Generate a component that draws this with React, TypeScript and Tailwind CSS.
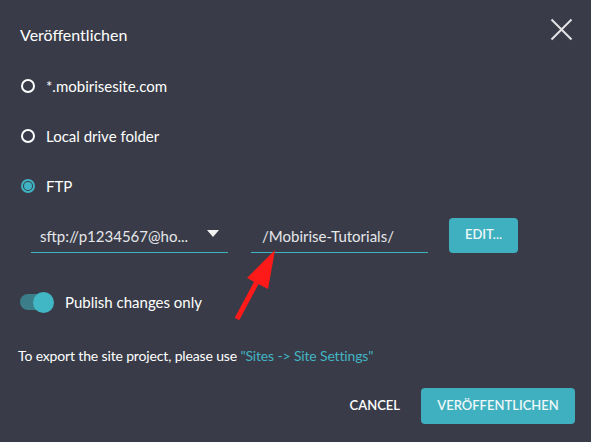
import { useState } from 'react';

const Radio = ({ label, checked }: { label: string; checked?: boolean }) => (
  <div className="flex items-center h-[20px] gap-[11px]">
    {checked ? (
      <span className="w-[14px] h-[14px] rounded-full border-2 border-[#3fb5c3] flex items-center justify-center">
        <span className="w-[8px] h-[8px] rounded-full bg-[#3fb5c3]" />
      </span>
    ) : (
      <span className="w-[14px] h-[14px] rounded-full border-2 border-white" />
    )}
    <span className="text-[15px] text-white">{label}</span>
  </div>
);

const App = () => {
  const [onlyChanges] = useState(true);

  return (
    <div
      className="relative w-[591px] h-[442px] bg-[#393c48] text-white overflow-hidden"
      style={{ fontFamily: 'Lato, "Noto Sans", sans-serif' }}
    >
      {/* close */}
      <svg className="absolute left-[550px] top-[18px]" width="23" height="23" viewBox="0 0 23 23">
        <path d="M1.5 1.5 L21.5 21.5 M21.5 1.5 L1.5 21.5" stroke="#e4e4e6" strokeWidth="2" />
      </svg>

      <div className="pl-[20px] pr-[16px] pt-[25px]">
        <h2 className="text-[16px] leading-[20px]">Veröffentlichen</h2>

        <div className="pl-px mt-[31px] flex flex-col gap-[30px]">
          <Radio label="*.mobirisesite.com" />
          <Radio label="Local drive folder" />
          <Radio label="FTP" checked />
        </div>

        {/* ftp settings */}
        <div className="flex items-center mt-[23px] pl-[11px]">
          <div className="w-[197px] h-[34px] border-b border-[#3fb5c3] flex items-center justify-between pl-[9px] pr-[9px] pt-[2px]">
            <span className="text-[15px] text-[#e6e7ea]">sftp://p1234567@ho...</span>
            <svg width="12" height="7" viewBox="0 0 12 7" className="mb-[6px]">
              <path d="M0 0 H12 L6 7 Z" fill="#f2f2f2" />
            </svg>
          </div>
          <div className="ml-[23px] w-[177px] h-[34px] border-b border-[#3fb5c3] flex items-center pl-[11px] pt-[2px]">
            <span className="text-[15px] text-[#e6e7ea]">/Mobirise-Tutorials/</span>
          </div>
          <button className="ml-[21px] w-[69px] h-[35px] rounded-[4px] bg-[#3fb0bf] text-[13px] font-semibold text-[#eef7f9] -mt-[2px]">
            EDIT...
          </button>
        </div>

        {/* toggle */}
        <div className="flex items-center mt-[37px] h-[24px]">
          <div className="relative w-[34px] h-[20px]">
            <div className="absolute left-0 top-[2px] w-[32px] h-[16px] rounded-full bg-[#3b7e89]" />
            {onlyChanges && (
              <div className="absolute left-[13px] top-0 w-[21px] h-[21px] rounded-full bg-[#41b7c5]" />
            )}
          </div>
          <span className="ml-[11px] text-[15px]">Publish changes only</span>
        </div>

        <p className="mt-[31px] text-[14px] -ml-[2px] tracking-[-0.15px]">
          To export the site project, please use{' '}
          <span className="text-[#42b4c3]">"Sites -&gt; Site Settings"</span>
        </p>

        <div className="flex justify-end items-center mt-[22px]">
          <button className="text-[13px] font-semibold mr-[21px]">CANCEL</button>
          <button className="w-[154px] h-[36px] rounded-[4px] bg-[#3fb0bf] text-[13px] font-semibold text-[#eef7f9]">
            VERÖFFENTLICHEN
          </button>
        </div>
      </div>

      {/* red annotation arrow */}
      <svg className="absolute left-0 top-0 pointer-events-none" width="591" height="442">
        <path d="M237 319 L260 276" stroke="#ff1a1a" strokeWidth="5" />
        <path d="M275 250 L247 278 L268 289 Z" fill="#ff1a1a" />
      </svg>
    </div>
  );
};

export default App;
